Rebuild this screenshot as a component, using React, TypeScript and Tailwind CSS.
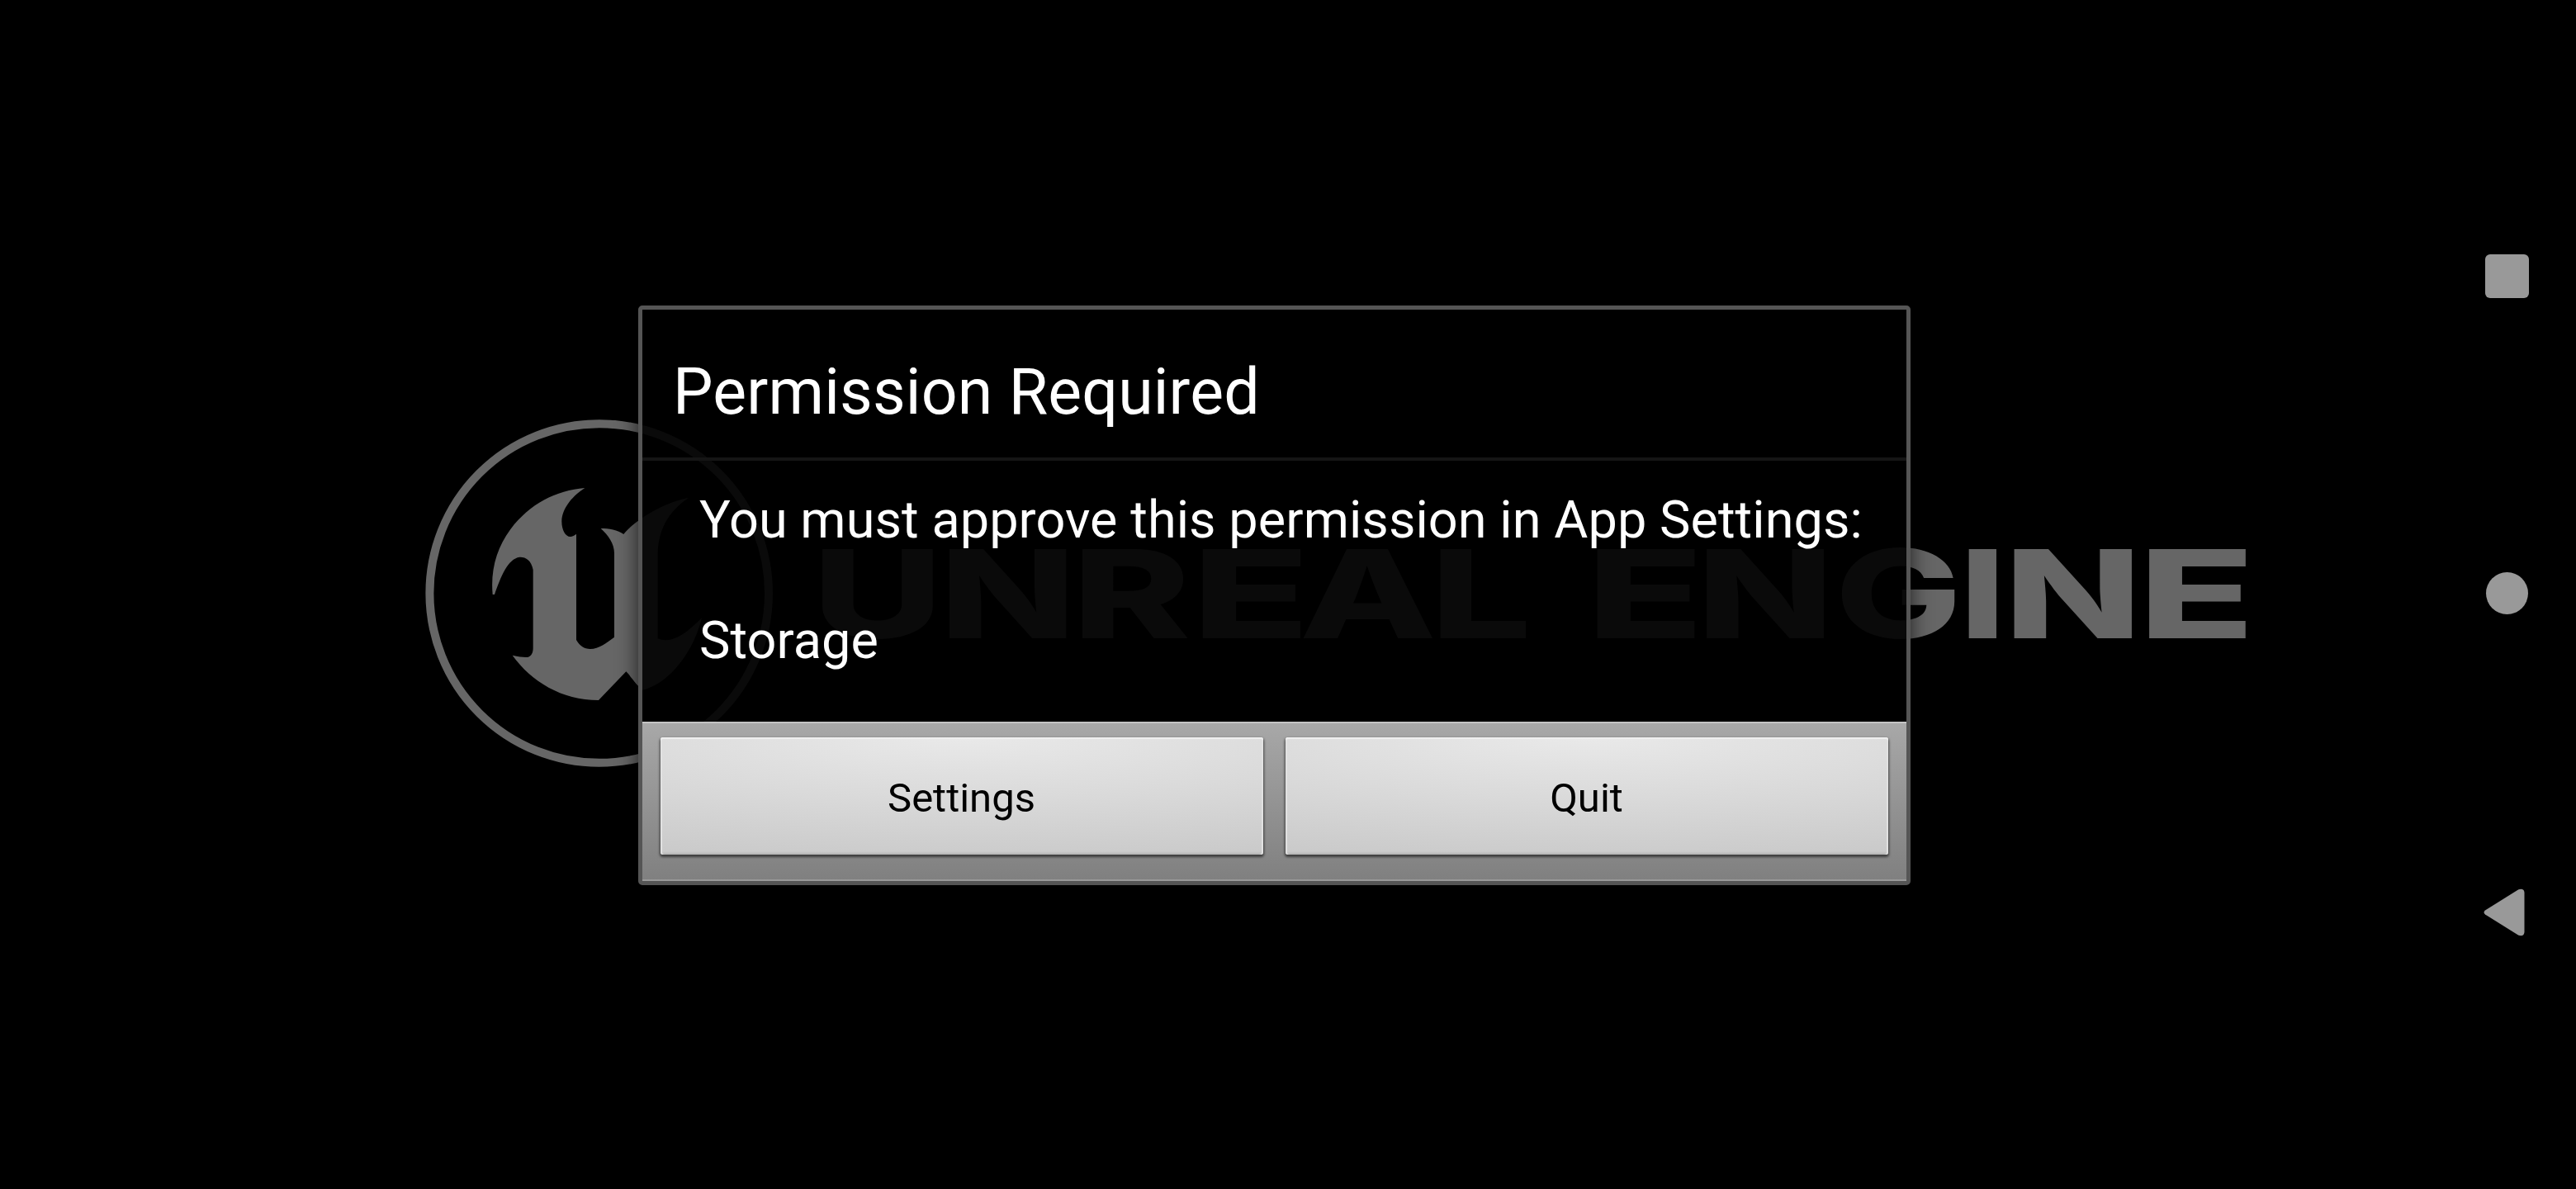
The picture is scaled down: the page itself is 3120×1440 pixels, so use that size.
const GLYPH_SIZE = 149;
const GLYPH_FONT = `800 ${GLYPH_SIZE}px Inter`;

// [letter, left edge, right edge] of each extended glyph in the wordmark
const WORDMARK: [string, number, number][] = [
  ["U", 995.5, 1130],
  ["N", 1149.5, 1292],
  ["R", 1310.5, 1440],
  ["E", 1456, 1575.5],
  ["A", 1578, 1736],
  ["L", 1744, 1849],
  ["E", 1934, 2053],
  ["N", 2066.5, 2209.5],
  ["G", 2229.5, 2367.5],
  ["I", 2384, 2419],
  ["N", 2439, 2582.5],
  ["E", 2602.5, 2720.5],
];

function Wordmark() {
  const ctx = document.createElement("canvas").getContext("2d")!;
  ctx.font = GLYPH_FONT;
  return (
    <g fill="#666666" fontFamily="Inter, sans-serif" fontWeight={800} fontSize={GLYPH_SIZE}>
      {WORDMARK.map(([ch, x0, x1], i) => {
        const m = ctx.measureText(ch);
        const ink = m.actualBoundingBoxLeft + m.actualBoundingBoxRight;
        const s = (x1 - x0) / ink;
        return (
          <text key={i} transform={`translate(${x0 + m.actualBoundingBoxLeft * s} 772.5) scale(${s} 1)`}>
            {ch}
          </text>
        );
      })}
    </g>
  );
}

function Splash() {
  return (
    <svg className="absolute inset-0 h-full w-full" viewBox="0 0 3120 1440">
      <circle cx="725.7" cy="718.5" r="205.3" fill="none" stroke="#666666" strokeWidth="10" />
      <path
        transform="translate(500 490) scale(0.33333)"
        fill="#666666"
        d="M290 690 C282 600 305 520 355 453 C425 360 520 312 625 303 C585 328 541 375 541 425 C541 455 555 480 572 480 C580 480 588 475 594 470 L594 855 C608 878 622 888 645 888 C675 888 705 865 732 845 L732 540 C732 505 710 475 683 450 C712 450 745 455 766 471 C810 415 920 353 1003 338 C925 390 890 460 890 550 L890 850 C945 872 1000 825 1050 775 C1020 900 930 1015 835 1037 C812 1020 795 990 775 970 L675 1074 C540 1074 430 1005 362 911 C390 917 408 919 420 917 C432 912 437 900 437 885 L437 600 C430 565 410 553 388 554 C345 560 320 625 297 690 Z"
      />
      <Wordmark />
    </svg>
  );
}

function DialogButton({ label }: { label: string }) {
  return (
    <button className="flex h-[142px] flex-1 items-center justify-center rounded-[3px] bg-[radial-gradient(ellipse_130%_105%_at_50%_0%,#e9e9e9_0%,#cacaca_100%)] pt-[5px] pr-[1px] font-[Roboto,sans-serif] text-[49px] leading-none text-black shadow-[inset_0_2px_1px_#f0f0f0,inset_2px_0_1px_#e2e2e2,inset_-2px_0_1px_#e2e2e2,inset_0_-2px_2px_#b4b4b4,0_2px_3px_1px_rgba(0,0,0,0.55)]">
      {label}
    </button>
  );
}

function PermissionDialog() {
  return (
    <section className="relative mt-[370px] ml-[773px] flex h-[702px] w-[1541px] flex-col rounded-[5px] border-[5px] border-[#555555] bg-black/90 font-[Roboto,sans-serif] text-white shadow-[0_0_26px_rgba(0,0,0,0.7)]">
      <h1 className="h-[179px] pt-[55px] pl-[37px] text-[77px] leading-[90px] tracking-[0.15px]">Permission Required</h1>
      <div className="h-[4px] bg-[#151515]" />
      <div className="flex-1 pt-[35px] pl-[69px] text-[63px] leading-[73px] tracking-[0.06px]">
        <p className="whitespace-nowrap">You must approve this permission in App Settings:</p>
        <p className="mt-[73px]">Storage</p>
      </div>
      <footer className="flex h-[193px] gap-[27px] border-t-2 border-b-2 border-t-[#c4c4c4] border-b-[#999999] bg-linear-to-b from-[#a8a8a8] to-[#808080] px-[22px] pt-[17px]">
        <DialogButton label="Settings" />
        <DialogButton label="Quit" />
      </footer>
    </section>
  );
}

function NavigationBar() {
  return (
    <nav className="relative mr-[57px] ml-auto flex w-[53px] flex-col items-start justify-between pt-[308px] pb-[306px]">
      <span className="size-[53px] rounded-[6px] bg-[#999999]" />
      <span className="ml-[1px] size-[51px] rounded-full bg-[#999999]" />
      <svg className="-ml-[2px] h-[58px] w-[50px]" viewBox="0 0 50 58" fill="#999999">
        <path d="M2 26.500 L42.500 1.200 Q49 -0.500 49.500 5 L49.500 53 Q49 58.500 42.500 56.800 L2 31.500 Q-1 29 2 26.500 Z" />
      </svg>
    </nav>
  );
}

export default function App() {
  return (
    <main className="relative flex h-[1440px] w-[3120px] overflow-hidden bg-black">
      <Splash />
      <PermissionDialog />
      <NavigationBar />
    </main>
  );
}
